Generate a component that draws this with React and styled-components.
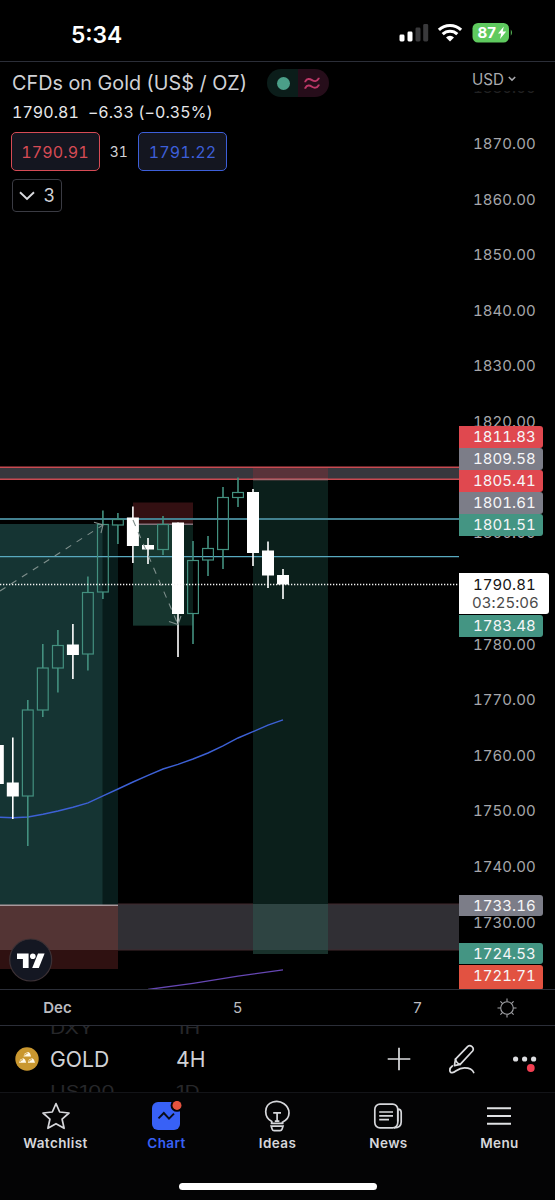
import React from "react";
import styled, { createGlobalStyle } from "styled-components";

const ticks = Array.from({ length: 17 }, (_, i) => (1880 - i * 10).toFixed(2));

const tags = [
    { value: "1811.83", top: 364, color: "#e0484f" },
    { value: "1809.58", top: 386, color: "#7c7d88" },
    { value: "1805.41", top: 408, color: "#e0484f" },
    { value: "1801.61", top: 430, color: "#7c7d88" },
    { value: "1801.51", top: 452, color: "#449583" },
    { value: "1783.48", top: 553, color: "#449583" },
    { value: "1733.16", top: 832.5, color: "#7c7d88" },
    { value: "1724.53", top: 880.5, color: "#449583" },
    { value: "1721.71", top: 902.5, color: "#e25241", height: 25 },
];

// x, high, body top, body bottom, low, falling
const candles = [
    [-2.2, 745, 745, 784, 784, true],
    [12.8, 737.5, 782.5, 796.5, 819, true],
    [27.8, 700, 710, 796, 846, false],
    [42.8, 644, 668, 710, 717, false],
    [57.9, 630, 645.5, 668, 692.5, false],
    [72.9, 624, 644.5, 655, 679, true],
    [87.9, 576.5, 592.5, 654, 670.5, false],
    [102.9, 510.5, 524.5, 592, 599, false],
    [117.9, 513, 519.5, 525, 544, false],
    [132.9, 506.5, 517.5, 546, 563, true],
    [148, 538, 545, 549.5, 564, true],
    [163, 516, 524.5, 549.5, 555, false],
    [178, 522.5, 522.5, 614, 657, true],
    [193, 541, 560.5, 613.5, 644, false],
    [208, 536, 548.5, 560, 576, false],
    [223, 487, 497.5, 549.5, 569, false],
    [238, 477.5, 492.5, 497.5, 507, false],
    [253, 489, 492, 553, 566, true],
    [268, 541.5, 550.5, 575.5, 588, true],
    [283, 569, 575, 584.5, 599, true],
];

const Candle = ({ data }) => {
    const [x, high, top, bottom, low, falling] = data;
    if (falling) {
        return (
            <g fill="#fff">
                <rect x={x - 0.8} y={high} width="1.6" height={low - high} />
                <rect x={x - 6} y={top} width="12" height={bottom - top} />
            </g>
        );
    }
    return (
        <g fill="none" stroke="#43907f" strokeWidth="1.2">
            <path d={`M${x} ${high}V${top}M${x} ${bottom}V${low}`} strokeWidth="1.6" />
            <rect x={x - 5.4} y={top} width="10.8" height={bottom - top} />
        </g>
    );
};

const Plot = () => (
    <PlotSvg viewBox="0 62 459 927">
        <rect x="0" y="524" width="118" height="381" fill="#081c1b" />
        <rect x="0" y="524" width="102.5" height="381" fill="#153433" />
        <rect x="0" y="905" width="118" height="64" fill="#2f1111" />
        <rect x="0" y="905" width="118" height="45" fill="#533434" />
        <rect x="118" y="904" width="341" height="46" fill="#302f34" />
        <path d="M118 904H459M118 950H459" stroke="#40292d" />
        <path d="M0 905.2H118" stroke="#a8989c" strokeWidth="1.4" />

        <rect x="0" y="467" width="459" height="12.5" fill="#38373d" />
        <rect x="253" y="467" width="75" height="12.5" fill="#59333a" />
        <rect x="253" y="480" width="75" height="474" fill="#0b1f1b" />
        <rect x="253" y="904" width="75" height="46" fill="#2e4442" />
        <rect x="253" y="950" width="75" height="4" fill="#19312b" />
        <path d="M0 467.2H459M0 479.2H459" stroke="#c94b52" strokeWidth="1.5" />
        <path d="M253 479.6H328" stroke="#a8666c" strokeWidth="1.5" />

        <rect x="133" y="502.5" width="60" height="21.5" fill="#331012" />
        <rect x="133" y="524.5" width="60" height="101" fill="#0b211c" />
        <rect x="133" y="524.5" width="45" height="101" fill="#17362f" />
        <path d="M0 519H459" stroke="#43808f" strokeWidth="2" />
        <path d="M0 556.7H459" stroke="#58a9bf" strokeWidth="1.3" />
        <path d="M133 524.3H193" stroke="#83717a" strokeWidth="1.4" />

        <path d="M0 817.2L13 817.8L28 817L43 814.2L58 811L73 807.2L88 802.8L103 795.8L118 789L133 782L148 775.3L163 769L178 764.3L193 759L208 753L223 745.8L238 738L253 731.7L268 725.2L283 719.8" fill="none" stroke="#3d61d6" strokeWidth="1.4" />
        <path d="M148 989.5L193 983.3L238 976.2L283 969.8" fill="none" stroke="#6647b4" strokeWidth="1.3" />

        {candles.map((c) => <Candle key={c[0]} data={c} />)}

        <g fill="none" stroke="#7f8f8c" strokeWidth="1.1">
            <path d="M0 591L103 525" strokeDasharray="6.5 6.5" />
            <path d="M94 522.3L103 525L101 533" />
            <path d="M133 520L178 624.5" strokeDasharray="6.5 6.5" />
            <path d="M169 621.5L178 624.5L181 616" />
        </g>
        <path d="M0 584.4H459" stroke="#f4f4f4" strokeWidth="1.5" strokeDasharray="1.3 1.7" />

        <circle cx="30.7" cy="960" r="21" fill="#141722" stroke="#3c3135" strokeWidth="1.2" />
        <g fill="#fff">
            <path d="M17 953.5H28.6V968H22.9V959H17Z" />
            <circle cx="32.8" cy="956.3" r="2.8" />
            <path d="M38 953.5H44.6L38.8 968H32.2Z" />
        </g>
    </PlotSvg>
);

const StatusIcons = () => (
    <svg width="114" height="22" viewBox="399 22 114 22">
        <rect x="399.5" y="34.5" width="5" height="7" rx="1.4" fill="#fff" />
        <rect x="407.5" y="31.5" width="5" height="10" rx="1.4" fill="#fff" />
        <rect x="415.5" y="27.5" width="5" height="14" rx="1.4" fill="#39393b" />
        <rect x="423.2" y="24" width="5" height="17.5" rx="1.4" fill="#39393b" />
        <g fill="none" stroke="#fff" strokeWidth="3.1">
            <path d="M438.9 29.9A16.3 16.3 0 0 1 461.1 29.9" />
            <path d="M442.7 34.1A10.6 10.6 0 0 1 457.3 34.1" />
        </g>
        <path d="M446 37.4A5.8 5.8 0 0 1 454 37.4L450 41.5Z" fill="#fff" />
        <rect x="472.5" y="23" width="36.5" height="19.5" rx="5.5" fill="#5fca5f" />
        <path d="M510.8 29.6Q513 32.7 510.8 35.8Z" fill="#5fca5f" />
        <path d="M503.8 26.5L498 33.6H501.2L500 39L506.2 31.6H502.7Z" fill="#fff" />
        <text x="477.6" y="38.2" fill="#fff" fontSize="15" fontWeight="700" fontFamily="Inter, sans-serif">87</text>
    </svg>
);

const GearIcon = () => (
    <svg width="20" height="20" viewBox="0 0 20 20" fill="none" stroke="#a4a5a9" strokeWidth="1.1">
        <circle cx="10" cy="10" r="6.3" />
        <path d="M10 0.5V3.5M10 16.5V19.5M0.5 10H3.5M16.5 10H19.5M3.4 3.4L5.4 5.4M14.6 14.6L16.6 16.6M3.4 16.6L5.4 14.6M14.6 5.4L16.6 3.4" />
    </svg>
);

const GoldIcon = () => (
    <svg width="24" height="24" viewBox="0 0 24 24">
        <circle cx="12" cy="12" r="11.7" fill="#c9972f" />
        <g fill="#fff8e6">
            <path d="M8.5 9.6L9.9 6.2L13.3 5.1L15 6.2L16 9.6Z" />
            <path d="M4 15.8L5.3 12.4L8.4 11.3L10 12.4L11.2 15.8Z" />
            <path d="M12.8 15.8L14 12.4L17.2 11.3L18.8 12.4L20 15.8Z" />
        </g>
        <g stroke="#c9972f" strokeWidth="0.9" fill="none">
            <path d="M9.7 8.6L10.4 7L12.6 6.5" />
            <path d="M5.2 14.8L5.9 13.2L8 12.6" />
            <path d="M14 14.8L14.7 13.2L16.9 12.6" />
        </g>
    </svg>
);

const PencilIcon = () => (
    <svg width="28" height="30" viewBox="0 0 28 30" fill="none" stroke="#dcdde0" strokeWidth="1.7" strokeLinecap="round" strokeLinejoin="round">
        <path d="M6.4 21.6L7.5 15.2L19.8 2.4C22.4 0.3 26.8 3.8 24.6 7L12.2 20.3Z" />
        <path d="M7.5 15.2C8 17.8 9.8 19.8 12.2 20.3" />
        <path d="M4.3 22C0.8 24.4 1.2 29 4.3 28.7C8 28.2 9.6 23.8 16.5 23.8C22 23.8 24.7 26 25.7 28.5" />
    </svg>
);

const StarIcon = () => (
    <svg width="30" height="30" viewBox="-1 0 30 30" fill="none" stroke="#d6d7db" strokeWidth="1.7" strokeLinejoin="round">
        <path d="M15 2.6L18.7 11L28 12L21.1 18.2L23.1 27.3L15 22.7L6.9 27.3L8.9 18.2L2 12L11.3 11Z" />
    </svg>
);

const ChartIcon = () => (
    <svg width="32" height="30" viewBox="0 0 32 30">
        <rect x="2" y="1" width="28" height="28" rx="6" fill="#3861f6" />
        <circle cx="27" cy="4.4" r="6.4" fill="#040405" />
        <circle cx="27" cy="4.4" r="4.5" fill="#e5533f" />
        <path d="M8.5 17.3L13.8 12L19 17.7L24 12.7" fill="none" stroke="#0a0d18" strokeWidth="1.9" />
    </svg>
);

const IdeasIcon = () => (
    <svg width="30" height="32" viewBox="0 0 30 32" fill="none" stroke="#d6d7db" strokeWidth="1.7">
        <path d="M9.8 23.3V21.5C1.5 17 1.6 5 10.8 2C19 -0.4 27 5.4 27 13C27 17 24.6 20.2 20.4 22.2V23.3" />
        <path d="M8.7 23.3H21.5M11.2 12.8H19M15.1 12.8V21.2M12.8 21.2H17.4" />
        <path d="M9.2 26.2H21L20 29.2Q19.5 30.6 18 30.6H12.2Q10.7 30.6 10.2 29.2Z" />
    </svg>
);

const NewsIcon = () => (
    <svg width="30" height="30" viewBox="0 0 30 30" fill="none" stroke="#d6d7db" strokeWidth="1.7">
        <rect x="1.8" y="3.2" width="23" height="23.6" rx="5.2" />
        <path d="M24.8 8.2Q28.2 8.2 28.2 11.6V21Q28.2 26.8 21 26.8" />
        <path d="M24.8 8V20.5M6.2 11H20M6.2 14.8H20M6.2 18.6H16" />
    </svg>
);

const MenuIcon = () => (
    <svg width="30" height="30" viewBox="0 0 30 30" stroke="#e0e1e4" strokeWidth="2">
        <path d="M3 7.3H27M3 15H27M3 22.7H27" />
    </svg>
);

const tabs = [
    { label: "Watchlist", icon: <StarIcon /> },
    { label: "Chart", icon: <ChartIcon />, active: true },
    { label: "Ideas", icon: <IdeasIcon /> },
    { label: "News", icon: <NewsIcon /> },
    { label: "Menu", icon: <MenuIcon /> },
];

const App = () => (
    <Screen>
        <GlobalStyle />
        <StatusBar>
            <Clock>5:34</Clock>
            <StatusIcons />
        </StatusBar>

        <ChartArea>
            <Plot />
            <Legend>
                <TitleRow>
                    <Title>CFDs on Gold (US$ / OZ)</Title>
                    <MarketPill>
                        <PillHalf $bg="#0b1d1a"><OpenDot /></PillHalf>
                        <PillHalf $bg="#260d1a">
                            <svg width="16" height="13" viewBox="0 0 16 13" fill="none" stroke="#bd3868" strokeWidth="1.9">
                                <path d="M1.3 5.2V4.4C3 1 5.8 1.7 8 3.1S12.8 4.8 14.7 1.6V0.8" />
                                <path d="M1.3 11.8V11C3 7.6 5.8 8.3 8 9.7S12.8 11.4 14.7 8.2V7.4" />
                            </svg>
                        </PillHalf>
                    </MarketPill>
                </TitleRow>
                <PriceRow>
                    <span>1790.81</span>
                    <span>−6.33 (−0.35%)</span>
                </PriceRow>
                <QuoteRow>
                    <QuoteButton $color="#d64b55">1790.91</QuoteButton>
                    <Spread>31</Spread>
                    <QuoteButton $color="#3d5fd9">1791.22</QuoteButton>
                </QuoteRow>
                <CollapseButton>
                    <svg width="16" height="10" viewBox="0 0 16 10" fill="none" stroke="#d9dade" strokeWidth="1.9">
                        <path d="M1 1.3L8 8L15 1.3" />
                    </svg>
                    3
                </CollapseButton>
            </Legend>

            <PriceAxis>
                <TickList>
                    {ticks.map((t) => <Tick key={t}>{t}</Tick>)}
                </TickList>
                <Currency>
                    USD
                    <svg width="8" height="6" viewBox="0 0 8 6" fill="none" stroke="#a9aaae" strokeWidth="1.5">
                        <path d="M0.8 1L4 4.1L7.2 1" />
                    </svg>
                </Currency>
                {tags.map((t) => (
                    <PriceTag key={t.value} $top={t.top} $color={t.color} $height={t.height}>{t.value}</PriceTag>
                ))}
                <LastPrice>
                    <span>1790.81</span>
                    <Countdown>03:25:06</Countdown>
                </LastPrice>
            </PriceAxis>
        </ChartArea>

        <TimeAxis>
            <TimeLabel $bold>Dec</TimeLabel>
            <TimeLabel>5</TimeLabel>
            <TimeLabel>7</TimeLabel>
            <GearIcon />
        </TimeAxis>

        <Toolbar>
            <GoldIcon />
            <Picker $width={126}>
                <PickerItem>DXY</PickerItem>
                <PickerItem $current>GOLD</PickerItem>
                <PickerItem>US100</PickerItem>
            </Picker>
            <Picker $width={211}>
                <PickerItem>1H</PickerItem>
                <PickerItem $current>4H</PickerItem>
                <PickerItem>1D</PickerItem>
            </Picker>
            <Tools>
                <svg width="24" height="24" viewBox="0 0 24 24" stroke="#dcdde0" strokeWidth="1.7">
                    <path d="M12 0.7V23.3M0.7 12H23.3" />
                </svg>
                <PencilIcon />
                <svg width="26" height="28" viewBox="1 0 26 28" fill="#dcdde0">
                    <circle cx="3.6" cy="14" r="2.6" />
                    <circle cx="12.6" cy="14" r="2.6" />
                    <circle cx="21.6" cy="14" r="2.6" />
                    <circle cx="18.8" cy="23" r="3.9" fill="#f23f52" />
                </svg>
            </Tools>
        </Toolbar>

        <TabBar>
            {tabs.map((tab) => (
                <Tab key={tab.label} $active={tab.active}>
                    <TabIcon>{tab.icon}</TabIcon>
                    {tab.label}
                </Tab>
            ))}
            <HomeIndicator />
        </TabBar>
    </Screen>
);

export default App;

const GlobalStyle = createGlobalStyle`
    body {
        margin: 0;
        background: #000;
    }

    * {
        box-sizing: border-box;
    }

    svg {
        display: block;
        flex-shrink: 0;
    }
`;

const Screen = styled.div`
    width: 555px;
    height: 1200px;
    display: flex;
    flex-direction: column;
    overflow: hidden;
    background: #000;
    color: #d1d2d6;
    font-family: Inter, "Liberation Sans", sans-serif;
`;

const StatusBar = styled.div`
    height: 62px;
    flex-shrink: 0;
    display: flex;
    justify-content: space-between;
    align-items: center;
    padding: 5px 42px 0 71px;
    border-bottom: 1px solid #2b2e38;
`;

const Clock = styled.span`
    position: relative;
    top: 1px;
    color: #fff;
    font-size: 22.8px;
    font-weight: 600;
`;

const ChartArea = styled.div`
    position: relative;
    height: 927px;
    flex-shrink: 0;
    display: grid;
    grid-template-columns: 459px 96px;
`;

const PlotSvg = styled.svg`
    width: 459px;
    height: 927px;
`;

const Legend = styled.div`
    position: absolute;
    top: 7px;
    left: 12px;
    display: flex;
    flex-direction: column;
    align-items: flex-start;
`;

const TitleRow = styled.div`
    display: flex;
    align-items: center;
    height: 28px;
`;

const Title = styled.h1`
    margin: 0;
    width: 255px;
    font-size: 19.8px;
    font-weight: 400;
    white-space: nowrap;
`;

const MarketPill = styled.div`
    display: flex;
    width: 62px;
    height: 28px;
    border-radius: 14px;
    overflow: hidden;
`;

const PillHalf = styled.div`
    flex: 1;
    display: flex;
    align-items: center;
    justify-content: center;
    background: ${(props) => props.$bg};

    &:first-child {
        padding-left: 2px;
    }

    &:last-child {
        padding-right: 3px;
    }
`;

const OpenDot = styled.div`
    width: 13px;
    height: 13px;
    border-radius: 50%;
    background: #4b9f88;
`;

const PriceRow = styled.div`
    display: flex;
    align-items: center;
    gap: 9px;
    height: 30px;
    font-size: 16px;
    letter-spacing: 0.05px;
    font-variant-numeric: tabular-nums;
    color: #e6e7ea;
`;

const QuoteRow = styled.div`
    display: flex;
    align-items: center;
    margin-top: 5px;
    margin-left: -1.5px;
`;

const QuoteButton = styled.div`
    width: 89px;
    height: 39px;
    display: flex;
    align-items: center;
    justify-content: center;
    border: 1.5px solid ${(props) => props.$color};
    border-radius: 5px;
    background: #141620;
    color: ${(props) => props.$color};
    font-size: 16px;
    letter-spacing: 0.15px;
    font-variant-numeric: tabular-nums;
`;

const Spread = styled.span`
    width: 38.5px;
    text-align: center;
    font-size: 14px;
    font-variant-numeric: tabular-nums;
`;

const CollapseButton = styled.div`
    margin-top: 8px;
    width: 50px;
    height: 33px;
    display: flex;
    align-items: center;
    justify-content: center;
    gap: 8px;
    border: 1px solid #3a3b43;
    border-radius: 4px;
    font-size: 18px;
`;

const PriceAxis = styled.div`
    position: relative;
    height: 927px;
    overflow: hidden;
    font-size: 15px;
    letter-spacing: 0.05px;
    font-variant-numeric: tabular-nums;
`;

const TickList = styled.div`
    display: flex;
    flex-direction: column;
    margin-top: -1.9px;
    color: #a6a7ab;
`;

const Tick = styled.div`
    height: 55.62px;
    display: flex;
    align-items: center;
    padding-left: 14px;
`;

const Currency = styled.div`
    position: absolute;
    top: 0;
    left: 0;
    width: 96px;
    height: 34px;
    display: flex;
    align-items: center;
    gap: 4px;
    padding-left: 13px;
    background: linear-gradient(#000 29px, rgba(0, 0, 0, 0.8) 29px);
    color: #a9aaae;
    font-size: 15.2px;
    letter-spacing: 0;
`;

const PriceTag = styled.div`
    position: absolute;
    top: ${(props) => props.$top}px;
    left: 0;
    width: 84px;
    height: ${(props) => props.$height || 21.5}px;
    padding-left: 14px;
    border-radius: 0 3px 3px 0;
    background: ${(props) => props.$color};
    color: #f6f6f8;
    line-height: 21.5px;
`;

const LastPrice = styled.div`
    position: absolute;
    top: 511px;
    left: 0;
    width: 89.5px;
    height: 40.5px;
    padding: 3px 0 0 14px;
    display: flex;
    flex-direction: column;
    border-radius: 0 3px 3px 0;
    background: #fff;
    color: #131313;
    line-height: 18px;
`;

const Countdown = styled.span`
    margin-left: -1px;
    color: #4a4a4a;
`;

const TimeAxis = styled.div`
    height: 37px;
    flex-shrink: 0;
    display: grid;
    grid-template-columns: 115px 245px 115px 64px;
    align-items: center;
    justify-items: center;
    border-top: 1px solid #2b2e38;
    border-bottom: 1px solid #2b2e38;
`;

const TimeLabel = styled.span`
    font-size: 15px;
    font-weight: ${(props) => (props.$bold ? 600 : 400)};
    color: #bbbcc0;
`;

const Toolbar = styled.div`
    height: 66px;
    flex-shrink: 0;
    display: flex;
    align-items: center;
    padding-left: 15px;
    overflow: hidden;
`;

const Picker = styled.div`
    width: ${(props) => props.$width}px;
    height: 66px;
    display: flex;
    flex-direction: column;
    justify-content: center;
    padding-left: 11px;
    flex-shrink: 0;
`;

const PickerItem = styled.div`
    height: 31.5px;
    line-height: 32px;
    flex-shrink: 0;
    font-size: 21.2px;
    transform: ${(props) => (props.$current ? "none" : "scaleY(0.78)")};
    color: ${(props) => (props.$current ? "#d1d2d6" : "#26272a")};
`;

const Tools = styled.div`
    display: flex;
    align-items: center;
    gap: 37px;
    margin-left: 11px;
`;

const TabBar = styled.div`
    position: relative;
    flex: 1;
    display: grid;
    grid-template-columns: repeat(5, 1fr);
    align-items: start;
    border-top: 1px solid #131418;
    background: #040405;
`;

const Tab = styled.div`
    display: flex;
    flex-direction: column;
    align-items: center;
    padding-top: 6px;
    font-size: 13.5px;
    font-weight: 600;
    line-height: 20px;
    letter-spacing: 0.4px;
    color: ${(props) => (props.$active ? "#3861f6" : "#d6d7db")};
`;

const TabIcon = styled.div`
    height: 34px;
    display: flex;
    align-items: center;
    margin-left: -1px;
`;

const HomeIndicator = styled.div`
    position: absolute;
    left: 179px;
    bottom: 10px;
    width: 198px;
    height: 7px;
    border-radius: 4px;
    background: #fff;
`;
